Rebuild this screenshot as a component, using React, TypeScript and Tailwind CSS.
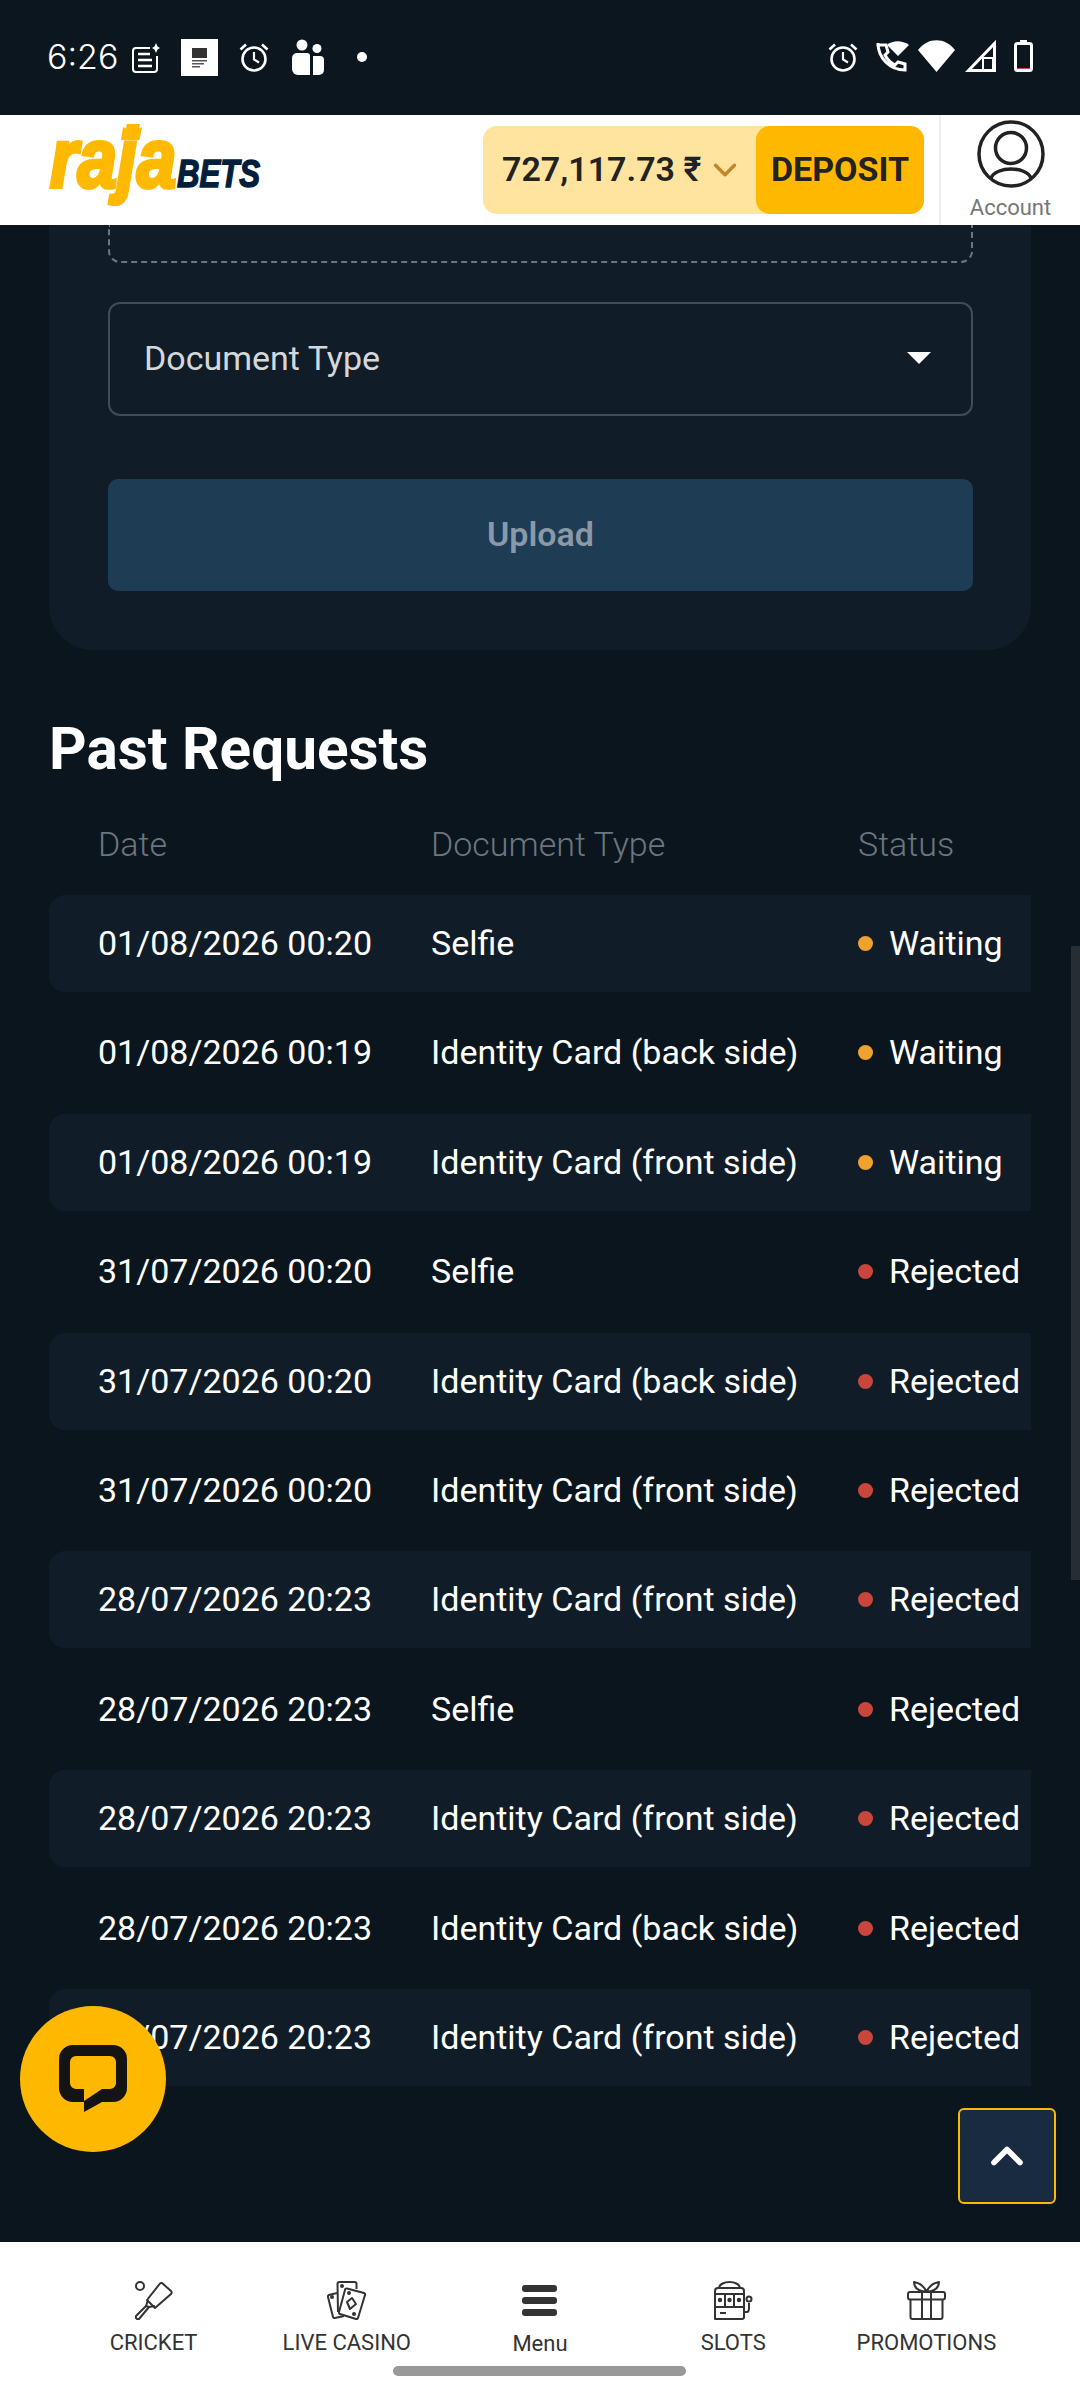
import { ChevronDown, ChevronUp } from "lucide-react";

const rows = [
  { date: "01/08/2026 00:20", doc: "Selfie", status: "Waiting" },
  { date: "01/08/2026 00:19", doc: "Identity Card (back side)", status: "Waiting" },
  { date: "01/08/2026 00:19", doc: "Identity Card (front side)", status: "Waiting" },
  { date: "31/07/2026 00:20", doc: "Selfie", status: "Rejected" },
  { date: "31/07/2026 00:20", doc: "Identity Card (back side)", status: "Rejected" },
  { date: "31/07/2026 00:20", doc: "Identity Card (front side)", status: "Rejected" },
  { date: "28/07/2026 20:23", doc: "Identity Card (front side)", status: "Rejected" },
  { date: "28/07/2026 20:23", doc: "Selfie", status: "Rejected" },
  { date: "28/07/2026 20:23", doc: "Identity Card (front side)", status: "Rejected" },
  { date: "28/07/2026 20:23", doc: "Identity Card (back side)", status: "Rejected" },
  { date: "28/07/2026 20:23", doc: "Identity Card (front side)", status: "Rejected" },
];

function AlarmIcon({ className }: { className?: string }) {
  return (
    <svg viewBox="0 0 30 31" className={className} fill="none" stroke="white" strokeWidth="2.6">
      <circle cx="15" cy="17" r="11.5" />
      <path d="M15 10v7.5l5 3" strokeWidth="2.2" />
      <path d="M1.5 7.5 7 2.5M28.500 7.500 23 2.500" />
    </svg>
  );
}

function StatusBar() {
  return (
    <div className="relative h-[115px] shrink-0 bg-[#0c161f] text-white">
      <div className="flex h-full items-start pl-[47px] pt-[39px]">
        <span className="w-[85px] text-[34px] leading-[36px] font-light font-['Inter',sans-serif]">6:26</span>
        {/* note with sparkle */}
        <svg viewBox="0 0 28 30" className="mt-[4px] h-[30px] w-[28px]" fill="none" stroke="white" strokeWidth="2">
          <path d="M18 5H4a3 3 0 0 0-3 3v18a3 3 0 0 0 3 3h18a3 3 0 0 0 3-3V13" />
          <path d="M6 11h12M6 17h14M6 23h14" strokeWidth="2.6" />
          <path d="M24 0l1.500 3.500L28 5l-2.500 1.500L24 10l-1.500-3.500L20 5l2.500-1.500z" fill="white" stroke="none" />
        </svg>
        <div className="ml-[21px] flex h-[37px] w-[37px] items-center justify-center bg-white">
          <svg viewBox="0 0 17 20" className="h-[20px] w-[17px]">
            <path d="M1 0h15v10H1z" fill="#333" />
            <path d="M1 12h15v1.500H1zM1 15h12v1.500H1zM1 18h8v1.500H1z" fill="#555" />
          </svg>
        </div>
        <AlarmIcon className="ml-[21px] mt-[3px] h-[31px] w-[30px]" />
        <svg viewBox="0 0 32 36" className="ml-[23px] h-[36px] w-[32px]" fill="white">
          <circle cx="10" cy="6" r="5.500" />
          <circle cx="25" cy="9.500" r="4.500" />
          <path d="M0 19a5 5 0 0 1 5-5h10a3 3 0 0 1 3 3v19H6a6 6 0 0 1-6-6z" />
          <path d="M21 17h7a4 4 0 0 1 4 4v10a5 5 0 0 1-5 5h-6z" />
        </svg>
        <span className="ml-[33px] mt-[13px] h-[10px] w-[10px] rounded-full bg-white" />
      </div>
      <div className="absolute top-[40px] right-[47px] flex items-start">
        <AlarmIcon className="mt-[2px] h-[31px] w-[30px]" />
        <svg viewBox="0 0 34 34" className="ml-[17px] h-[34px] w-[34px]" fill="none" stroke="white" strokeWidth="3">
          <path d="M3 3c0 15 12 27 27 27v-6l-7-2-3 3c-4-2-8-6-10-10l3-3-2-7H3z" />
          <path d="M12 5c6-5 15-5 22 0l-11 11z" fill="white" stroke="none" />
        </svg>
        <svg viewBox="0 0 37 32" className="ml-[9px] h-[32px] w-[37px]" fill="white">
          <path d="M0 10C10-3 27-3 37 10L18.500 32z" />
        </svg>
        <svg viewBox="0 0 31 32" className="ml-[10px] h-[32px] w-[31px]" fill="none" stroke="white" strokeWidth="3">
          <path d="M29.500 3.500V30.500H3.500z" />
          <path d="M18 18h10v12H18z" strokeWidth="2" />
        </svg>
        <svg viewBox="0 0 19 32" className="ml-[18px] h-[32px] w-[19px]" fill="none">
          <path d="M6 0h7v3H6z" fill="white" />
          <rect x="1.500" y="3.500" width="16" height="27" rx="2" stroke="white" strokeWidth="3" />
          <path d="M3 28.500h13" stroke="#c9503f" strokeWidth="1" />
        </svg>
      </div>
    </div>
  );
}

function Logo() {
  return (
    <svg viewBox="0 0 212 88" className="h-[88px] w-[212px] overflow-visible">
      <path d="M74 1l6 3 4-2.500 4 2.500 5-3-2.500 13H72z" fill="#ffb900" />
      <text
        transform="translate(1 61) scale(0.845 1)"
        fontFamily="'Liberation Sans', sans-serif"
        fontWeight="700"
        fontStyle="italic"
        fontSize="84"
        fill="#ffb900"
        stroke="#ffb900"
        strokeWidth="4"
      >
        raja
      </text>
      <text
        transform="translate(128 61) scale(0.80 1)"
        fontFamily="'Liberation Sans', sans-serif"
        fontWeight="700"
        fontStyle="italic"
        fontSize="39"
        fill="#031f3b"
        stroke="#031f3b"
        strokeWidth="1.500"
      >
        BETS
      </text>
    </svg>
  );
}

function Header() {
  return (
    <div className="flex h-[110px] shrink-0 items-start bg-white pl-[49px]">
      <div className="mt-[11px]">
        <Logo />
      </div>
      <div className="ml-[222px] mt-[11px] flex h-[88px] w-[441px] items-center rounded-[14px] bg-[#ffe4a0]">
        <span className="ml-[19px] mb-[2px] text-[34px] font-semibold whitespace-nowrap text-[#222222]">727,117.73 ₹</span>
        <ChevronDown className="ml-[5px] h-[38px] w-[38px] text-[#c4862b]" strokeWidth={2.2} />
        <button className="ml-auto flex h-full w-[168px] items-center justify-center rounded-[14px] bg-[#ffb800] pb-[2px] text-[34px] font-bold text-[#222222]">
          DEPOSIT
        </button>
      </div>
      <div className="ml-[15px] flex h-full w-[141px] flex-col items-center border-l-2 border-[#f0f0f0]">
        <svg viewBox="0 0 68 68" className="mt-[5px] h-[68px] w-[68px]" fill="none" stroke="#222222" strokeWidth="3.500">
          <circle cx="34" cy="34" r="32" />
          <circle cx="34" cy="28" r="15.500" />
          <path d="M14 58c5-12 35-12 40 0" />
        </svg>
        <span className="mt-[7px] text-[22px] leading-[26px] text-[#777777]">Account</span>
      </div>
    </div>
  );
}

function Row({ date, doc, status, shaded }: { date: string; doc: string; status: string; shaded: boolean }) {
  return (
    <div className={`flex h-[97px] items-center pl-[49px] text-[34px] whitespace-nowrap text-white ${shaded ? "rounded-l-[16px] bg-[#101d28]" : ""}`}>
      <span className="w-[333px]">{date}</span>
      <span className="w-[427px]">{doc}</span>
      <span className={`h-[15px] w-[15px] rounded-full ${status === "Waiting" ? "bg-[#f0a22e]" : "bg-[#c8463c]"}`} />
      <span className="ml-[16px]">{status}</span>
    </div>
  );
}

function NavItem({ label, children }: { label: string; children: React.ReactNode }) {
  return (
    <div className="flex flex-col items-center">
      <div className="h-[39px]">{children}</div>
      <span className="mt-[10px] text-[22px] leading-[26px] whitespace-nowrap text-[#333333]">{label}</span>
    </div>
  );
}

function BottomNav() {
  return (
    <div className="relative h-[158px] shrink-0 bg-white">
      <div className="grid grid-cols-5 px-[57px] pt-[39px]">
        <NavItem label="CRICKET">
          <svg viewBox="0 0 38 39" className="h-[39px] w-[38px]" fill="none" stroke="#333333" strokeWidth="2" strokeLinejoin="round">
            <circle cx="5" cy="5" r="4" />
            <path d="M27 2l9 8a2 2 0 0 1 0 3L20 27l-8-8L25 2.500a2 2 0 0 1 2-.5z" />
            <path d="M13 19l-2 6 3 1 6-1" />
            <path d="M11 25 1 35a2 2 0 0 0 0 2l1 1a2 2 0 0 0 2 0l10-12" />
          </svg>
        </NavItem>
        <NavItem label="LIVE CASINO">
          <svg viewBox="0 0 39 39" className="h-[39px] w-[39px]" fill="none" stroke="#333333" strokeWidth="2" strokeLinejoin="round">
            <path d="M11 31 10.500 3a2 2 0 0 1 2-2h15a2 2 0 0 1 2 2v5" />
            <path d="M10 12 2 14a1.500 1.500 0 0 0-1 2l5 20a1.500 1.500 0 0 0 2 1l9-2" />
            <path d="M20 7.500 37 12a1.500 1.500 0 0 1 1 2l-7 23a1.500 1.500 0 0 1-2 1L13 33a1.500 1.500 0 0 1-1-2l6-22a1.500 1.500 0 0 1 2-1.500z" fill="white" />
            <path d="M25 17l4 6-6 5-3-7z" />
            <circle cx="15" cy="5" r="1" fill="#333333" />
            <circle cx="5" cy="16" r="1" fill="#333333" />
            <circle cx="22" cy="12" r="1" fill="#333333" />
            <circle cx="27" cy="33" r="1" fill="#333333" />
          </svg>
        </NavItem>
        <div className="flex flex-col items-center">
          <div className="mt-[4px] flex h-[31px] w-[35px] flex-col justify-between">
            <span className="h-[7px] rounded-[3px] bg-[#333333]" />
            <span className="h-[7px] rounded-[3px] bg-[#333333]" />
            <span className="h-[7px] rounded-[3px] bg-[#333333]" />
          </div>
          <span className="mt-[15px] text-[22px] leading-[26px] text-[#333333]">Menu</span>
        </div>
        <NavItem label="SLOTS">
          <svg viewBox="0 0 39 39" className="h-[39px] w-[39px]" fill="none" stroke="#333333" strokeWidth="2" strokeLinejoin="round">
            <path d="M1 38V10a3 3 0 0 1 3-3h23a3 3 0 0 1 3 3v26a2 2 0 0 1-2 2z" />
            <path d="M5 7c1-8 20-8 21 0" />
            <path d="M1 13h29M1 26h29" />
            <path d="M11 13v13M20 13v13" />
            <path d="M30 31h3c2 0 2-2 2-4V22" />
            <circle cx="35" cy="18" r="2.500" />
            <circle cx="6" cy="19" r="1.200" fill="#333333" />
            <circle cx="15.500" cy="19" r="1.200" fill="#333333" />
            <circle cx="25" cy="19" r="1.200" fill="#333333" />
            <path d="M6 32h6" />
          </svg>
        </NavItem>
        <NavItem label="PROMOTIONS">
          <svg viewBox="0 0 39 39" className="h-[39px] w-[39px]" fill="none" stroke="#333333" strokeWidth="2" strokeLinejoin="round">
            <rect x="1" y="11" width="37" height="7.500" rx="2" />
            <path d="M3.500 18.500V36a2 2 0 0 0 2 2h28a2 2 0 0 0 2-2V18.500" />
            <path d="M15 11v27M24 11v27" />
            <path d="M19.500 11C17 5 13 2 7 1c0 5 3 9 12.500 10zM19.500 11C22 5 26 2 32 1c0 5-3 9-12.500 10z" />
          </svg>
        </NavItem>
      </div>
      <div className="absolute top-[124px] left-[393px] h-[10px] w-[293px] rounded-full bg-[#999999]" />
    </div>
  );
}

export default function App() {
  return (
    <div className="relative flex h-[2400px] w-[1080px] flex-col overflow-hidden bg-[#0b151d] font-['Roboto',sans-serif]">
      <StatusBar />
      <Header />
      <main className="min-h-0 flex-1 pl-[49px]">
        <section className="w-[982px] rounded-b-[44px] bg-[#101d28] pr-[58px] pb-[59px] pl-[59px]">
          <div className="h-[38px] rounded-b-[12px] border-2 border-t-0 border-dashed border-[#6d7680]" />
          <div className="mt-[39px] flex h-[114px] items-center justify-between rounded-[12px] border-2 border-[#434c56] pr-[40px] pl-[34px] pb-[2px] text-[34px] text-[#d5d8da]">
            <span>Document Type</span>
            <span className="h-0 w-0 border-x-[12px] border-t-[12px] border-x-transparent border-t-white" />
          </div>
          <button className="mt-[63px] flex h-[112px] w-full items-center justify-center rounded-[10px] bg-[#1f3c55] pb-[2px] text-[34px] font-semibold text-[#8a99a8]">
            Upload
          </button>
        </section>
        <h2 className="mt-[66px] text-[58.500px] leading-[66px] font-bold text-white">Past Requests</h2>
        <div className="mt-[42px] flex h-[40px] items-center pl-[49px] text-[34px] font-light text-[#6b7680]">
          <span className="w-[333px]">Date</span>
          <span className="w-[427px]">Document Type</span>
          <span>Status</span>
        </div>
        <div className="mt-[31px] flex w-[982px] flex-col gap-[12.4px]">
          {rows.map((row, i) => (
            <Row key={i} date={row.date} doc={row.doc} status={row.status} shaded={i % 2 === 0} />
          ))}
        </div>
      </main>
      <BottomNav />

      {/* scrollbar thumb */}
      <div className="absolute top-[946px] right-0 h-[634px] w-[9px] bg-[#262d33]" />

      {/* chat bubble */}
      <div className="absolute top-[2006px] left-[20px] flex h-[146px] w-[146px] items-center justify-center rounded-full bg-[#ffb800]">
        <svg viewBox="0 0 68 68" className="h-[68px] w-[68px]">
          <path
            fillRule="evenodd"
            d="M14 0h40a14 14 0 0 1 14 14v29a14 14 0 0 1-14 14H43L25 67V57H14A14 14 0 0 1 0 43V14A14 14 0 0 1 14 0zM17 11a6 6 0 0 0-6 6v21a6 6 0 0 0 6 6h8v12l18-12h8a6 6 0 0 0 6-6V17a6 6 0 0 0-6-6z"
            fill="#141414"
          />
        </svg>
      </div>

      {/* back to top */}
      <button className="absolute top-[2108px] left-[958px] flex h-[96px] w-[98px] items-center justify-center rounded-[6px] border-2 border-[#ffb800] bg-[#182b40]">
        <ChevronUp className="h-[52px] w-[52px] text-white" strokeWidth={2.6} />
      </button>
    </div>
  );
}
